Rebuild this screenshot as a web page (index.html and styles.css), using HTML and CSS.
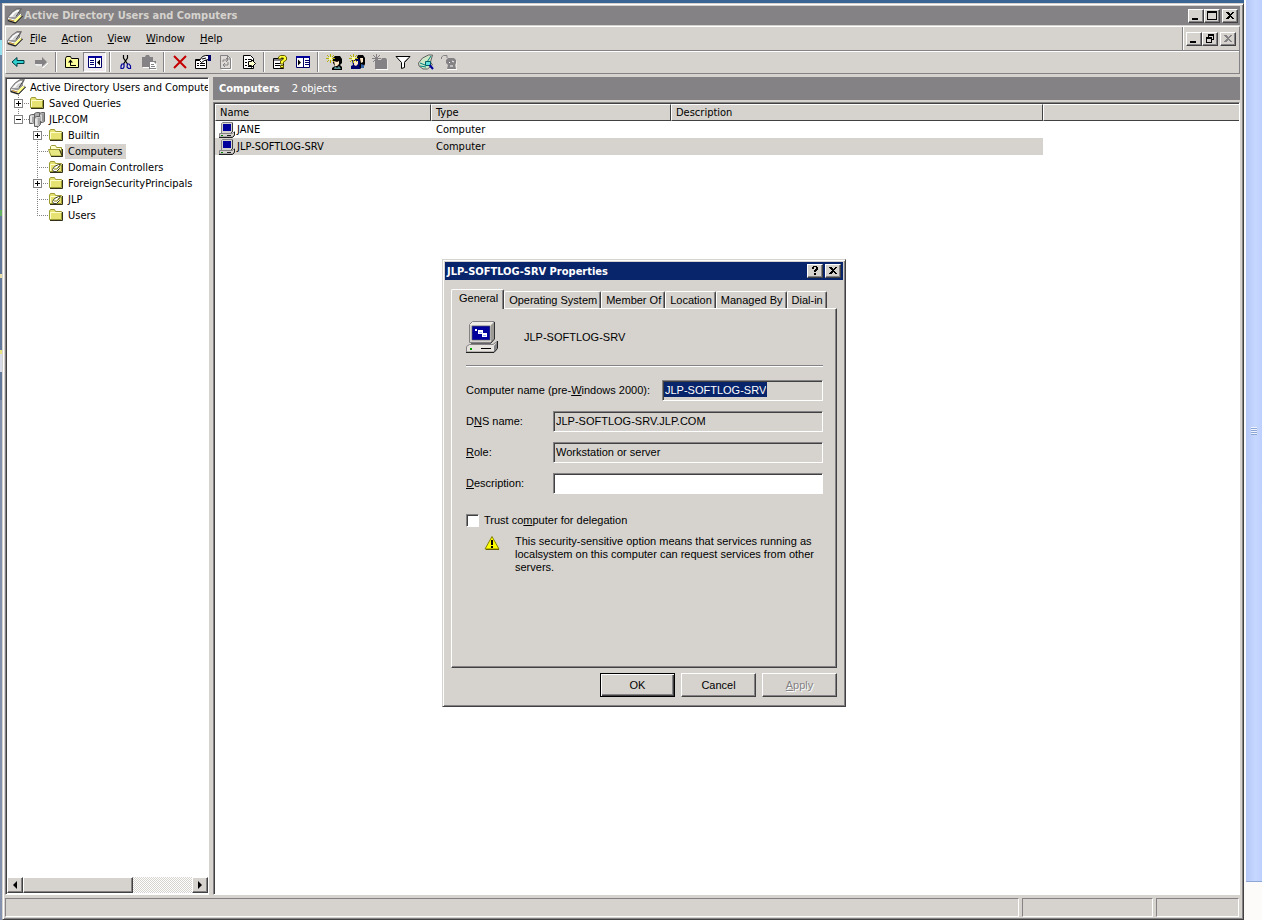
FILE: index.html
```html
<!DOCTYPE html>
<html lang="en">
<head>
<meta charset="utf-8">
<title>Active Directory Users and Computers</title>
<link rel="stylesheet" href="styles.css">
</head>
<body>
<svg class="defs" aria-hidden="true">
  <symbol id="i-mmc" viewBox="0 0 16 16">
    <path d="M0.500 9.500 5 4l5-3.500h4.500L12 5.500l3.500 2.500L9 15H7l-6.500-2z" fill="#9c9a9c" stroke="#636163" stroke-width=".7"/>
    <path d="M2 9 6 4.500l4-2.500h3.500L9 8.500z" fill="#fff"/>
    <path d="M5 8.500 8 5l3-1.500.5.500-3 4z" fill="#ceceCE"/>
    <path d="M1 10.500 8 12l6-6" fill="none" stroke="#fff"/>
    <path d="M8 11.500l5-4.500 2 1-6 6H7z" fill="#ffff84"/>
    <path d="M1 12.500l6 2 1.500.500 7-7" fill="none" stroke="#000" stroke-width=".9"/>
    <path d="M9 8.500l4.500-7" stroke="#424142"/>
    <path d="M2 11.500l5 1.500" stroke="#ce9a31"/>
  </symbol>
  <symbol id="i-folder" viewBox="0 0 16 16">
    <path d="M1.500 4l1-1.500h4l1 2h6v8h-12z" fill="#e7e373" stroke="#9c9a31"/>
    <path d="M2.500 12V5.500h11" fill="none" stroke="#ffffce"/>
    <path d="M14.500 5v8.500H2" fill="none" stroke="#31311a"/>
  </symbol>
  <symbol id="i-open" viewBox="0 0 16 16">
    <path d="M2.500 12V3.500l1-1h4l1 2h5V13" fill="#ffffce" stroke="#9c9a31"/>
    <path d="M0.500 6.500h11l2.500 6.500H3z" fill="#e7e784" stroke="#9c9a31"/>
    <path d="M11.500 6.500l3 7M14.500 6v7.500H3" fill="none" stroke="#31311a"/>
  </symbol>
  <symbol id="i-ou" viewBox="0 0 16 16">
    <use href="#i-folder"/>
    <path d="M4.500 10.500l2-3 4-2h2l-2 3 1 1-3 3h-3z" fill="#fff" stroke="#424131"/>
    <path d="M6 10h3l2-3" fill="none" stroke="#848200"/>
  </symbol>
  <symbol id="i-domain" viewBox="0 0 16 16">
    <g stroke="#636163"><path d="M5.500 2.500l2-1h3v9h-5zM10.500 2.500l2-1h3v9l-2 1h-3z" fill="#adaead"/>
    <path d="M0.500 4.500l2-1h3v8l-2 1h-3zM5.500 6.500l2-1h4v8l-2 2h-4z" fill="#ceceCE"/></g>
    <path d="M2 5v6M7 8v6M12 4v6" stroke="#fff"/><path d="M10 7v7M14 3v7M4 6v5" stroke="#848284"/>
  </symbol>
  <symbol id="i-pc" viewBox="0 0 16 16">
    <path d="M2.500 1.500l1-1h10v9l-2 2h-9z" fill="#d6d3ce" stroke="#848284"/>
    <path d="M13.500 1v9l-1.500 1" fill="none" stroke="#424142"/>
    <path d="M4 2h8v7H4z" fill="#00009c"/>
    <path d="M0.500 11.500h13l2-2v3l-2 2.500H0.500z" fill="#d6d3ce" stroke="#848284"/>
    <path d="M0 15.500h13.500l2-2V10M8 13.500h4" fill="none" stroke="#212021"/>
    <path d="M2 13h2v1H2z" fill="#008200"/>
  </symbol>
  <symbol id="i-pcbig" viewBox="0 0 32 32">
    <path d="M3.500 3.500l3-3h21.500v17l-3 4H3.500z" fill="#efebe7" stroke="#848284"/>
    <path d="M25 4l3-3v16.500l-3 4z" fill="#9c9a94"/>
    <path d="M28.500 1v17l-3.500 4" fill="none" stroke="#313031"/>
    <path d="M4 4h21v17H4z" fill="#d6d3ce"/>
    <path d="M6 5h18v14H6z" fill="#00009c" stroke="#636163" stroke-width=".6"/>
    <path d="M9 8h2v2H9zM12 9h5v4h-5zM16 12h5v4h-5z" fill="#fff"/>
    <path d="M13 11h3v1h-3zM17 14h3v1h-3z" fill="#9cb2ff"/>
    <path d="M5 22h20v2H5z" fill="#636163"/>
    <path d="M0.500 25.500l3-2H27l4-3v6l-3 4.500H0.500z" fill="#e7e3de" stroke="#848284"/>
    <path d="M28 25l3-4v6l-3 4z" fill="#848284"/>
    <path d="M0 31.500h28l3.500-4V20" fill="none" stroke="#212021"/>
    <path d="M15 27h10v1H15z" fill="#000"/><path d="M4 27h2v2H4z" fill="#00a200"/>
  </symbol>
  <symbol id="i-back" viewBox="0 0 16 16">
    <path d="M2 8l5-4.500V6.500h7v3H7v3z" fill="#31cfce" stroke="#003c42"/>
  </symbol>
  <symbol id="i-fwd" viewBox="0 0 16 16">
    <path d="M15 9l-5 5v-3H3v-1" fill="none" stroke="#fff"/>
    <path d="M14 8L9 3v3H2v4h7v3z" fill="#848284"/>
  </symbol>
  <symbol id="i-up" viewBox="0 0 16 16">
    <path d="M1.500 13.500v-9l1-2h4l1 2h7v9z" fill="#ffff9c" stroke="#000"/>
    <path d="M6.500 7v4.500H12" fill="none" stroke="#000"/><path d="M4 8.500L6.500 5.500 9 8.500z" fill="#000"/>
  </symbol>
  <symbol id="i-tree" viewBox="0 0 16 16">
    <path d="M1.500 2.500h13v11h-13z" fill="#fff" stroke="#00006b"/><path d="M1 2h14v2H1z" fill="#00009c"/>
    <path d="M8.500 3v11M3 6.500h4M3 8.500h4M3 10.500h4" stroke="#00006b"/><path d="M10 8.500l3-3v6z" fill="#000"/>
  </symbol>
  <symbol id="i-show" viewBox="0 0 16 16">
    <path d="M1.500 2.500h13v11h-13z" fill="#fff" stroke="#00006b"/><path d="M1 2h14v2H1z" fill="#00009c"/>
    <path d="M8.500 3v11M10 6.500h4M10 8.500h4M10 10.500h4" stroke="#00006b"/><path d="M6 8.500l-3-3v6z" fill="#000"/>
  </symbol>
  <symbol id="i-cut" viewBox="0 0 16 16">
    <path d="M5.500 1v3l4 6M9.500 1v3l-4 6" fill="none" stroke="#000" stroke-width="1.200"/>
    <path d="M4 10h2v3l-1 1.500H3V12zM9.500 10h1.500l1.500 2v2.500h-2L9 13z" fill="none" stroke="#00009c" stroke-width="1.200"/>
  </symbol>
  <symbol id="i-paste" viewBox="0 0 16 16">
    <path d="M1 3h3l1-2h3l1 2h3v4h3v8H8v-2H1z" fill="#848284"/>
    <path d="M9 8h4l2 2v4H9z" fill="#fff"/><path d="M10 10.500h3M10 12.500h4" stroke="#848284"/>
    <path d="M2 13.500h6M9 15.500h7V9" fill="none" stroke="#fff"/>
  </symbol>
  <symbol id="i-del" viewBox="0 0 16 16">
    <path d="M2 2l12 12M14 2L2 14" stroke="#c60000" stroke-width="2"/>
  </symbol>
  <symbol id="i-props" viewBox="0 0 16 16">
    <path d="M0.500 5.500h11v9h-11z" fill="#fff" stroke="#000"/>
    <path d="M1 6.500h10M2 9.500h2M5 9.500h5M2 11.500h2M5 11.500h5" stroke="#000"/>
    <path d="M4.500 6.500l3-4 3-1h3v4l-4 1-3 2z" fill="#fff" stroke="#000"/>
    <path d="M13 1h3v6h-3z" fill="#00006b"/><path d="M7 5l4-1" stroke="#000"/>
  </symbol>
  <symbol id="i-refresh" viewBox="0 0 16 16">
    <path d="M3.500 15.500h10V4" fill="none" stroke="#fff"/>
    <path d="M2.500 1.500h7l3 3v10h-10z" fill="#dedbd6" stroke="#848284"/>
    <path d="M9.500 1v4h3M5 8V6h4M8 4l2 2-2 2M10 8v3H6M7 9l-2 2 2 2" fill="none" stroke="#848284"/>
  </symbol>
  <symbol id="i-export" viewBox="0 0 16 16">
    <path d="M2.500 1.500h7l3 3v10h-10z" fill="#fff" stroke="#000"/>
    <path d="M4 5.500h2M7 5.500h3M4 8.500h2M4 11.500h2M7 12.500h3" stroke="#000"/>
    <path d="M7.500 7.500h3V5.500l4 4-4 4v-2h-3z" fill="#ffffce" stroke="#000"/>
  </symbol>
  <symbol id="i-help" viewBox="0 0 16 16">
    <path d="M1.500 4.500h10v10h-10z" fill="#fff" stroke="#000"/>
    <path d="M2 5h9v2H2z" fill="#848284"/><path d="M3 9.500h5M3 11.500h5" stroke="#000"/>
    <path d="M6.500 5V3l2-1.500h4l2 1.500v3l-3 2v2h-3V7l3-2V4H9v1z" fill="#ffff31" stroke="#635d00"/>
    <path d="M8.500 11.500h3v2h-3z" fill="#ffff31" stroke="#635d00"/>
  </symbol>
  <symbol id="i-user" viewBox="0 0 16 16">
    <path d="M7 4l2-2h5l2 3v4l-2 2 2 2v3H6v-2l3-2-2-3z" fill="#000"/>
    <path d="M8 7l3 1 2-1v3l-2 2H9z" fill="#ffe7c6"/><path d="M9 12l2 2 2-2 2 3H8z" fill="#5a9294"/>
    <path d="M4.500 0v9M0 4.500h9M1 1l7 7M8 1L1 8" stroke="#b5b200"/><path d="M3 3h3v3H3z" fill="#ffff9c"/>
  </symbol>
  <symbol id="i-group" viewBox="0 0 16 16">
    <path d="M9 1h5l2 3v6l-2 4H8V3z" fill="#000"/><path d="M11 4h3v4l-2 1z" fill="#ffe7c6"/>
    <path d="M3 6l2-2h4l2 3v4l-1 1 2 3H2v-3l2-1z" fill="#00006b"/>
    <path d="M5 7h4v3l-2 2-2-1z" fill="#ffe7c6"/><path d="M12 10l3 1v3h-3z" fill="#3161a5"/>
    <path d="M4.500 0v9M0 4.500h9M1 1l7 7M8 1L1 8" stroke="#b5b200"/><path d="M3 3h3v3H3z" fill="#ffff9c"/>
  </symbol>
  <symbol id="i-newou" viewBox="0 0 16 16">
    <path d="M4 15.500h12V6" fill="none" stroke="#fff"/>
    <path d="M3 6h6l1-2h4l1 2v9H3z" fill="#848284"/><path d="M4.500 0v9M0 4.500h9M1 1l7 7M8 1L1 8" stroke="#848284"/>
  </symbol>
  <symbol id="i-filter" viewBox="0 0 16 16">
    <path d="M1 2.500h14L9.500 8.500v5l-3 1v-6z" fill="#fff" stroke="#000"/><path d="M9 8l4-4" stroke="#848284"/>
  </symbol>
  <symbol id="i-find" viewBox="0 0 16 16">
    <path d="M0.500 9l4-5 6-3h4l-2 7 2 3-5 4H5l-4-3z" fill="#cee7c6" stroke="#636163"/>
    <path d="M2 9l5 2 6-9M2 12l6 1" fill="none" stroke="#008284"/>
    <path d="M7.500 7.500h5v4h-5z" fill="#63dfde" stroke="#006163"/><path d="M11.500 11l3.500 4" stroke="#00009c" stroke-width="2"/>
  </symbol>
  <symbol id="i-lastgray" viewBox="0 0 16 16">
    <path d="M5 6l2-2h6l2 2v3l-1 2 1 4H6l1-4-2-2z" fill="#848284"/><path d="M0.500 5V3l2-1.500H6V4" stroke="#848284" fill="none"/>
    <path d="M8 8l1 1M11 7l2 1M9 12h3M6 15.500h10V7" fill="none" stroke="#fff"/>
  </symbol>
  <symbol id="i-warn" viewBox="0 0 16 16">
    <path d="M8 1.500L15 14H1z" fill="#ffff00" stroke="#848200" stroke-linejoin="round"/>
    <path d="M15 14.500H2" stroke="#636100"/><path d="M7 5h2v5H7zM7 11h2v2H7z" fill="#000"/>
  </symbol>
  <symbol id="i-min" viewBox="0 0 12 10"><path d="M2 7h6v2H2z"/></symbol>
  <symbol id="i-max" viewBox="0 0 12 10"><path d="M1 0h10v9H1zM2 2v6h8V2z" fill-rule="evenodd"/></symbol>
  <symbol id="i-restore" viewBox="0 0 12 10"><path d="M4 0h6v6H8v3H2V3h2zM5 2v1h3v2h1V2zM3 5v3h4V5z" fill-rule="evenodd"/></symbol>
  <symbol id="i-close" viewBox="0 0 12 10"><path d="M2 1h2l2 2 2-2h2L7 4.500 10 8H8L6 6 4 8H2l3-3.500z"/></symbol>
  <symbol id="i-q" viewBox="0 0 12 10"><path d="M3 1h1V0h4v1h1v3H8v1H7v1H5V4h1V3h1V1H5v2H3zM5 7h2v2H5z"/></symbol>
</svg>

<div class="desktop">
  <main class="window">
    <header class="titlebar">
      <svg class="icon"><use href="#i-mmc"/></svg>
      <h1>Active Directory Users and Computers</h1>
      <button class="cap" aria-label="Minimize"><svg><use href="#i-min"/></svg></button>
      <button class="cap" aria-label="Maximize"><svg><use href="#i-max"/></svg></button>
      <button class="cap apart" aria-label="Close"><svg><use href="#i-close"/></svg></button>
    </header>

    <div class="bars">
      <div class="menubar">
        <nav class="menus">
          <svg class="icon"><use href="#i-mmc"/></svg>
          <button><u>F</u>ile</button>
          <button><u>A</u>ction</button>
          <button><u>V</u>iew</button>
          <button><u>W</u>indow</button>
          <button><u>H</u>elp</button>
        </nav>
        <div class="childcaps">
          <button class="cap" aria-label="Minimize view"><svg><use href="#i-min"/></svg></button>
          <button class="cap" aria-label="Restore view"><svg><use href="#i-restore"/></svg></button>
          <button class="cap apart" disabled aria-label="Close view"><svg><use href="#i-close"/></svg></button>
        </div>
      </div>
      <div class="toolbar">
        <button aria-label="Back"><svg class="icon"><use href="#i-back"/></svg></button>
        <button aria-label="Forward"><svg class="icon"><use href="#i-fwd"/></svg></button>
        <i class="sep"></i>
        <button aria-label="Up one level"><svg class="icon"><use href="#i-up"/></svg></button>
        <button class="pressed" aria-label="Show console tree"><svg class="icon"><use href="#i-tree"/></svg></button>
        <i class="sep"></i>
        <button aria-label="Cut"><svg class="icon"><use href="#i-cut"/></svg></button>
        <button aria-label="Paste"><svg class="icon"><use href="#i-paste"/></svg></button>
        <i class="sep"></i>
        <button aria-label="Delete"><svg class="icon"><use href="#i-del"/></svg></button>
        <button aria-label="Properties"><svg class="icon"><use href="#i-props"/></svg></button>
        <button aria-label="Refresh"><svg class="icon"><use href="#i-refresh"/></svg></button>
        <button aria-label="Export list"><svg class="icon"><use href="#i-export"/></svg></button>
        <i class="sep"></i>
        <button aria-label="Help"><svg class="icon"><use href="#i-help"/></svg></button>
        <button aria-label="Show action pane"><svg class="icon"><use href="#i-show"/></svg></button>
        <i class="sep"></i>
        <button aria-label="New user"><svg class="icon"><use href="#i-user"/></svg></button>
        <button aria-label="New group"><svg class="icon"><use href="#i-group"/></svg></button>
        <button aria-label="New organizational unit"><svg class="icon"><use href="#i-newou"/></svg></button>
        <button aria-label="Filter"><svg class="icon"><use href="#i-filter"/></svg></button>
        <button aria-label="Find"><svg class="icon"><use href="#i-find"/></svg></button>
        <button aria-label="Add to group"><svg class="icon"><use href="#i-lastgray"/></svg></button>
      </div>
    </div>

    <div class="panes">
      <aside class="treepane">
        <ul class="tree">
          <li><svg class="icon"><use href="#i-mmc"/></svg><span>Active Directory Users and Computers</span></li>
          <li><i class="slot mid"><b class="box plus"></b></i><svg class="icon"><use href="#i-folder"/></svg><span>Saved Queries</span></li>
          <li><i class="slot last"><b class="box"></b></i><svg class="icon"><use href="#i-domain"/></svg><span>JLP.COM</span></li>
          <li class="sub"><i class="slot mid"><b class="box plus"></b></i><svg class="icon"><use href="#i-folder"/></svg><span>Builtin</span></li>
          <li class="sub"><i class="slot mid"></i><svg class="icon"><use href="#i-open"/></svg><span class="current">Computers</span></li>
          <li class="sub"><i class="slot mid"></i><svg class="icon"><use href="#i-ou"/></svg><span>Domain Controllers</span></li>
          <li class="sub"><i class="slot mid"><b class="box plus"></b></i><svg class="icon"><use href="#i-folder"/></svg><span>ForeignSecurityPrincipals</span></li>
          <li class="sub"><i class="slot mid"></i><svg class="icon"><use href="#i-ou"/></svg><span>JLP</span></li>
          <li class="sub"><i class="slot last"></i><svg class="icon"><use href="#i-folder"/></svg><span>Users</span></li>
        </ul>
        <div class="hscroll">
          <button aria-label="Scroll left"><svg viewBox="0 0 8 8"><path d="M6 0v8L2 4z"/></svg></button>
          <div class="thumb"></div>
          <div class="track"></div>
          <button aria-label="Scroll right"><svg viewBox="0 0 8 8"><path d="M2 0v8l4-4z"/></svg></button>
        </div>
      </aside>

      <section class="detail">
        <div class="banner"><h2>Computers</h2><span>2 objects</span></div>
        <div class="list">
          <table>
            <colgroup><col class="c-name"><col class="c-type"><col class="c-desc"><col></colgroup>
            <thead><tr><th>Name</th><th>Type</th><th>Description</th><th></th></tr></thead>
            <tbody>
              <tr><td><div class="cell"><svg class="icon"><use href="#i-pc"/></svg>JANE</div></td><td>Computer</td><td></td><td></td></tr>
              <tr class="picked"><td><div class="cell"><svg class="icon"><use href="#i-pc"/></svg>JLP-SOFTLOG-SRV</div></td><td>Computer</td><td></td><td></td></tr>
            </tbody>
          </table>
        </div>
      </section>
    </div>

    <footer class="statusbar"><div></div><div class="s2"></div><div class="s3"></div></footer>
  </main>
  <div class="edge"><div class="edge-bar"><i></i></div></div>
</div>

<form class="dialog" role="dialog" aria-labelledby="dlg-title">
  <header class="titlebar active">
    <h1 id="dlg-title">JLP-SOFTLOG-SRV Properties</h1>
    <button type="button" class="cap" aria-label="Help"><svg><use href="#i-q"/></svg></button>
    <button type="button" class="cap apart" aria-label="Close"><svg><use href="#i-close"/></svg></button>
  </header>
  <div class="dialog-body">
    <div class="tabs" role="tablist">
      <button type="button" role="tab" class="on" aria-selected="true">General</button>
      <button type="button" role="tab">Operating System</button>
      <button type="button" role="tab">Member Of</button>
      <button type="button" role="tab">Location</button>
      <button type="button" role="tab">Managed By</button>
      <button type="button" role="tab">Dial-in</button>
    </div>
    <div class="sheet" role="tabpanel">
      <div class="ident"><svg class="big"><use href="#i-pcbig"/></svg><span>JLP-SOFTLOG-SRV</span></div>
      <hr>
      <div class="row wide"><label for="f-name">Computer name (pre-<u>W</u>indows 2000):</label><div class="field"><input id="f-name" class="selected" readonly value="JLP-SOFTLOG-SRV"></div></div>
      <div class="row"><label for="f-dns">D<u>N</u>S name:</label><div class="field"><input id="f-dns" readonly value="JLP-SOFTLOG-SRV.JLP.COM"></div></div>
      <div class="row"><label for="f-role"><u>R</u>ole:</label><div class="field"><input id="f-role" readonly value="Workstation or server"></div></div>
      <div class="row"><label for="f-desc"><u>D</u>escription:</label><div class="field white"><input id="f-desc"></div></div>
      <div class="check"><input type="checkbox" id="f-trust"><label for="f-trust">Trust co<u>m</u>puter for delegation</label></div>
      <div class="warn"><svg class="icon"><use href="#i-warn"/></svg><p>This security-sensitive option means that services running as localsystem on this computer can request services from other servers.</p></div>
    </div>
    <div class="actions">
      <button type="button" class="push default">OK</button>
      <button type="button" class="push">Cancel</button>
      <button type="button" class="push" disabled><u>A</u>pply</button>
    </div>
  </div>
</form>
</body>
</html>
```
FILE: styles.css
```css
:root {
  --face: #d6d3ce;
  --shade: #848284;
  --dark: #424142;
  --navy: #08246b;
  --ui: "DejaVu Sans Condensed", "DejaVu Sans", sans-serif;
  --dlg: "Liberation Sans", Arial, sans-serif;
}
* { box-sizing: border-box; }
body { margin: 0; height: 100vh; overflow: hidden; font: 11px/16px var(--ui); color: #000; background: #396494; }
button, input { font: inherit; color: inherit; margin: 0; padding: 0; border: 0; background: none; border-radius: 0; }
h1, h2, p, ul { margin: 0; padding: 0; font-size: inherit; }
.defs { position: absolute; width: 0; height: 0; }
.icon { width: 16px; height: 16px; flex: none; display: block; }

.desktop { height: 100%; display: flex; padding: 3px 0 0 2px;
  background: linear-gradient(#396494 3px, #5a6d8c 3px 40px, #94dfef 40px 55px, #6b82a5 55px 210px, #63b263 210px 216px, #63799c 216px 274px, #e7dfa5 274px 278px, #63799c 278px 350px, #e7e384 350px 354px, #d6dbe7 354px 372px, #63799c 372px 400px, #8492ad 400px); }
.window { flex: 1; min-width: 0; display: flex; flex-direction: column; padding: 2px 3px 2px 2px; background: var(--face);
  border: 1px solid var(--face); border-right-color: var(--dark); border-bottom-color: var(--dark);
  box-shadow: inset 1px 1px #fff, inset -1px -1px var(--shade); }
.edge { width: 18px; background: #fcfbf9; padding: 0 0 38px 2px; display: flex; margin-top: -3px; }
.edge-bar { flex: 1; background: linear-gradient(90deg, #b5c7f7, #c6d7ff 60%, #bdcfff); border-bottom: 1px solid #8ca6d6; display: grid; place-items: center; padding-bottom: 20px; }
.edge-bar i { width: 6px; height: 8px; background: repeating-linear-gradient(#eff3ff 0 1px, #8ca6d6 1px 2px); }

.titlebar { display: flex; align-items: center; height: 19px; padding: 0 2px; background: var(--shade); color: var(--face); font-weight: bold; flex: none; }
.titlebar h1 { flex: 1; white-space: nowrap; padding-left: 1px; }
.titlebar.active { background: var(--navy); color: #fff; height: 18px; padding: 0 2px 0 1px; }
.cap { width: 16px; height: 14px; background: var(--face); color: #000; display: grid; place-items: center; border: 1px solid; border-color: #fff var(--dark) var(--dark) #fff; box-shadow: inset -1px -1px var(--shade); flex: none; }
.cap svg { width: 12px; height: 10px; fill: currentColor; display: block; shape-rendering: crispEdges; }
.cap.apart { margin-left: 2px; }
.cap:disabled { color: var(--shade); }

.bars { margin-top: 1px; border: 1px solid; border-color: #fff var(--shade) var(--shade) #fff; flex: none; }
.menubar { display: flex; height: 24px; border-bottom: 1px solid var(--shade); }
.menus { flex: 1; display: flex; align-items: center; padding-left: 1px; }
.menus button { padding: 0 7px 0 8px; }
.menus .icon + button { padding-left: 7px; }
.childcaps { display: flex; align-items: center; padding: 0 3px; border-left: 1px solid var(--shade); box-shadow: inset 1px 0 #fff; }
.toolbar { display: flex; align-items: flex-start; height: 22px; border-top: 1px solid #fff; }
.toolbar button { width: 23px; height: 20px; display: grid; place-items: center; }
.toolbar .pressed { background: #efebef; border: 1px solid; border-color: var(--shade) #fff #fff var(--shade); }
.sep { width: 2px; height: 20px; margin: 0 3px; border-left: 1px solid var(--shade); border-right: 1px solid #fff; }

.panes { flex: 1; min-height: 0; display: grid; grid-template-columns: 204px minmax(0, 1fr); gap: 4px; margin-top: 3px; }
.treepane { display: flex; flex-direction: column; min-width: 0; background: #fff; border: 1px solid; border-color: var(--shade) #fff #fff var(--shade); box-shadow: inset 1px 1px var(--dark); padding: 1px 0 1px 1px; }
.tree { list-style: none; flex: 1; padding: 0 0 0 3px; overflow: hidden; }
.tree li { display: flex; align-items: center; height: 16px; white-space: nowrap; }
.tree span { padding: 0 4px 0 3px; margin-left: 1px; line-height: 15px; }
.tree .current { background: var(--face); }
.tree .sub { padding-left: 19px; }
.slot { flex: none; width: 19px; height: 16px; display: block; padding: 4px 0 0 4px;
  background: repeating-linear-gradient(var(--shade) 0 1px, transparent 1px 2px) 8px 0 / 1px 16px no-repeat,
    repeating-linear-gradient(90deg, var(--shade) 0 1px, transparent 1px 2px) 8px 8px / 11px 1px no-repeat; }
.slot.last { background-size: 1px 8px, 11px 1px; }
.box { display: block; width: 9px; height: 9px; border: 1px solid var(--shade);
  background: linear-gradient(#000, #000) 1px 3px / 5px 1px no-repeat #fff; }
.box.plus { background: linear-gradient(#000, #000) 1px 3px / 5px 1px no-repeat, linear-gradient(#000, #000) 3px 1px / 1px 5px no-repeat #fff; }

.hscroll { display: flex; height: 16px; }
.hscroll button, .thumb { background: var(--face); border: 1px solid; border-color: #fff var(--dark) var(--dark) #fff; box-shadow: inset -1px -1px var(--shade); }
.hscroll button { width: 16px; display: grid; place-items: center; }
.hscroll svg { width: 8px; height: 8px; }
.thumb { flex: 11; }
.track { flex: 6; background: repeating-conic-gradient(#fff 0 25%, var(--face) 0 50%) 0 0 / 2px 2px; }

.detail { display: flex; flex-direction: column; min-width: 0; }
.banner { display: flex; align-items: center; gap: 12px; height: 24px; padding: 1px 0 0 6px; background: var(--shade); color: #fff; border-bottom: 1px solid var(--face); }
.list { flex: 1; margin-top: 1px; background: #fff; border: 1px solid; border-color: var(--shade) #fff #fff var(--shade); box-shadow: inset 1px 1px var(--dark); padding: 1px 0 0 1px; }
table { width: 100%; table-layout: fixed; border-collapse: separate; border-spacing: 0; }
.c-name { width: 216px; } .c-type { width: 240px; } .c-desc { width: 372px; }
th, td { padding: 0 5px; text-align: left; font-weight: normal; white-space: nowrap; overflow: hidden; }
th { height: 17px; line-height: 15px; padding-left: 4px; background: var(--face); border: 1px solid; border-color: #fff var(--dark) var(--dark) #fff; }
th:last-child { border-right: 0; }
td { height: 17px; }
td:first-child { padding-left: 4px; }
.cell { display: flex; align-items: center; gap: 2px; }
.picked td:not(:last-child) { background: var(--face); }

.statusbar { display: flex; gap: 3px; height: 19px; margin: 3px 1px 0 0; flex: none; }
.statusbar div { flex: 1; border: 1px solid; border-color: var(--shade) #fff #fff var(--shade); }
.statusbar .s2 { flex: 0 0 131px; }
.statusbar .s3 { flex: 0 0 83px; }

.dialog { position: absolute; left: 442px; top: 259px; width: 404px; padding: 2px; background: var(--face); font: 11px/13px var(--dlg);
  border: 1px solid; border-color: var(--face) var(--dark) var(--dark) var(--face); box-shadow: inset 1px 1px #fff, inset -1px -1px var(--shade); }
.dialog .titlebar { font-family: var(--ui); }
.dialog-body { padding: 9px 6px 7px; }
.tabs { display: flex; align-items: flex-end; height: 19px; }
.tabs button { height: 17px; padding: 0 3px 0 4px; border: 1px solid; border-color: #fff var(--dark) transparent #fff; border-bottom: 0; border-radius: 2px 2px 0 0; box-shadow: inset -1px 0 var(--shade); white-space: nowrap; flex: none; }
.tabs .on { height: 20px; padding: 0 5px 3px 7px; margin-bottom: -1px; background: var(--face); z-index: 1; }
.sheet { border: 1px solid; border-color: #fff var(--dark) var(--dark) #fff; box-shadow: inset -1px -1px var(--shade); padding: 12px 13px 93px 14px; }
.ident { display: flex; align-items: center; gap: 26px; }
.big { width: 32px; height: 32px; }
hr { margin: 12px 0 13px; border: 0; border-top: 1px solid var(--shade); border-bottom: 1px solid #fff; }
.row { display: grid; grid-template-columns: 87px 1fr; align-items: center; margin-bottom: 10px; }
.row.wide { grid-template-columns: 196px 1fr; }
.row label { white-space: nowrap; }
.field { height: 21px; padding: 1px; display: flex; align-items: flex-start; border: 1px solid; border-color: var(--shade) #fff #fff var(--shade); box-shadow: inset 1px 1px var(--dark); }
.field input { width: 100%; height: 15px; padding: 0 1px; outline: 0; }
.field.white { background: #fff; }
.field input.selected { width: auto; field-sizing: content; height: 15px; background: var(--navy); color: #fff; }
.check { display: flex; align-items: center; gap: 5px; margin-top: 20px; }
.check input { appearance: none; width: 13px; height: 13px; background: #fff; border: 1px solid; border-color: var(--shade) #fff #fff var(--shade); box-shadow: inset 1px 1px var(--dark); }
.warn { display: flex; gap: 15px; padding-left: 18px; margin-top: 8px; }
.warn p { flex: 1; }
.actions { display: flex; justify-content: flex-end; gap: 6px; margin-top: 5px; }
.push { width: 75px; height: 24px; background: var(--face); border: 1px solid; border-color: #fff var(--dark) var(--dark) #fff; box-shadow: inset -1px -1px var(--shade); }
.push.default { border-color: #000; box-shadow: inset 1px 1px #fff, inset -1px -1px var(--dark), inset -2px -2px var(--shade); }
.push:disabled { color: var(--shade); text-shadow: 1px 1px #fff; }
```
